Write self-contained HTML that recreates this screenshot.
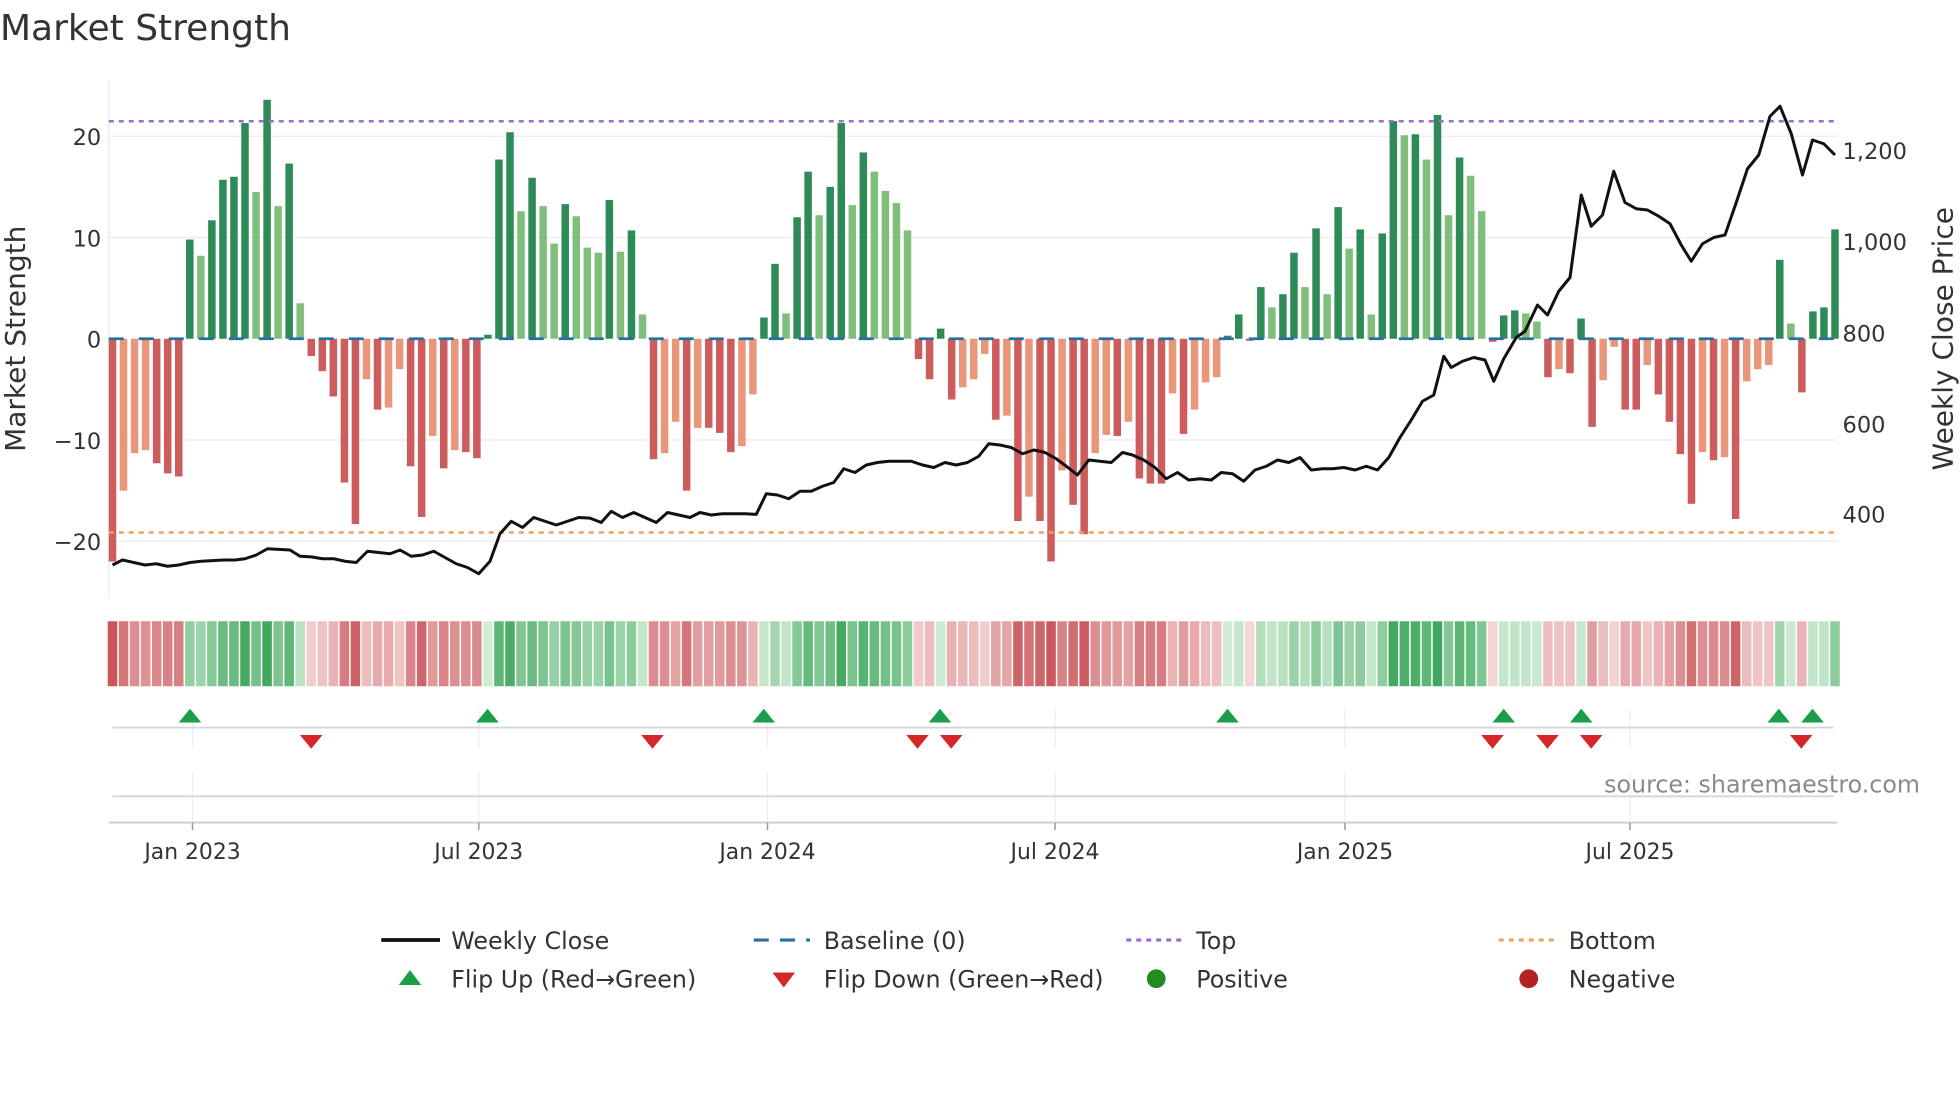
<!DOCTYPE html>
<html><head><meta charset="utf-8"><style>
html,body{margin:0;padding:0;background:#fff;}
svg{display:block;font-family:"DejaVu Sans","Liberation Sans",sans-serif;}
</style></head><body>
<svg id="s" width="1960" height="1102" viewBox="0 0 1568 881.6" xmlns="http://www.w3.org/2000/svg">
<rect width="1568" height="882" fill="#fff"/>
<text x="0" y="32" font-size="28.8" fill="#333">Market Strength</text>
<g stroke="#eceef2" stroke-width="1.2">
<line x1="87" x2="1470" y1="109" y2="109"/><line x1="87" x2="1470" y1="190" y2="190"/>
<line x1="87" x2="1470" y1="352" y2="352"/><line x1="87" x2="1470" y1="433" y2="433"/>
<line x1="87" x2="87" y1="64" y2="478"/>
</g>
<g font-size="18" fill="#333" text-anchor="end">
<text x="81" y="116">20</text><text x="81" y="197">10</text><text x="81" y="278">0</text>
<text x="81" y="359">−10</text><text x="81" y="440">−20</text>
</g>
<g font-size="18" fill="#333">
<text x="1474" y="127">1,200</text><text x="1474" y="200">1,000</text><text x="1474" y="273">800</text>
<text x="1474" y="346">600</text><text x="1474" y="418">400</text>
</g>
<text transform="translate(20,271) rotate(-90)" font-size="22.4" fill="#333" text-anchor="middle">Market Strength</text>
<text transform="translate(1562,271) rotate(-90)" font-size="22.4" fill="#333" text-anchor="middle">Weekly Close Price</text>
<g id="bars"></g>
<line x1="87" x2="1470" y1="271" y2="271" stroke="#2b6f9e" stroke-width="2.2" stroke-dasharray="12,12"/>
<line x1="87" x2="1470" y1="97" y2="97" stroke="#9b6bd6" stroke-width="2" stroke-dasharray="4,4"/>
<line x1="87" x2="1470" y1="426" y2="426" stroke="#f0a060" stroke-width="2" stroke-dasharray="4,4"/>
<polyline id="price" fill="none" stroke="#111" stroke-width="2.4" stroke-linejoin="round"/>
<g id="strip"></g>
<g stroke="#eceef2" stroke-width="1">
<line x1="154" x2="154" y1="568" y2="598"/><line x1="383" x2="383" y1="568" y2="598"/><line x1="614" x2="614" y1="568" y2="598"/><line x1="844" x2="844" y1="568" y2="598"/><line x1="1076" x2="1076" y1="568" y2="598"/><line x1="1304" x2="1304" y1="568" y2="598"/>
<line x1="154" x2="154" y1="617" y2="657"/><line x1="383" x2="383" y1="617" y2="657"/><line x1="614" x2="614" y1="617" y2="657"/><line x1="844" x2="844" y1="617" y2="657"/><line x1="1076" x2="1076" y1="617" y2="657"/><line x1="1304" x2="1304" y1="617" y2="657"/>
</g>
<line x1="90" x2="1467" y1="582" y2="582" stroke="#d4d6da" stroke-width="1.5"/>
<line x1="90" x2="1467" y1="637" y2="637" stroke="#d4d6da" stroke-width="1.5"/>
<line x1="87" x2="1470" y1="658" y2="658" stroke="#ccc" stroke-width="1.5"/>
<g stroke="#999" stroke-width="1.2">
<line x1="154" x2="154" y1="658" y2="664"/><line x1="383" x2="383" y1="658" y2="664"/><line x1="614" x2="614" y1="658" y2="664"/><line x1="844" x2="844" y1="658" y2="664"/><line x1="1076" x2="1076" y1="658" y2="664"/><line x1="1304" x2="1304" y1="658" y2="664"/>
</g>
<g id="flips"></g>
<text x="1536" y="634" font-size="19" fill="#8a8a8a" text-anchor="end">source: sharemaestro.com</text>
<g font-size="17.5" fill="#333" text-anchor="middle">
<text x="154" y="687">Jan 2023</text><text x="383" y="687">Jul 2023</text><text x="614" y="687">Jan 2024</text>
<text x="844" y="687">Jul 2024</text><text x="1076" y="687">Jan 2025</text><text x="1304" y="687">Jul 2025</text>
</g>
<g font-size="19" fill="#333">
<line x1="305" x2="352" y1="752" y2="752" stroke="#111" stroke-width="3"/>
<text x="361" y="759">Weekly Close</text>
<line x1="603" x2="648" y1="752" y2="752" stroke="#2b6f9e" stroke-width="2.5" stroke-dasharray="12,9"/>
<text x="659" y="759">Baseline (0)</text>
<line x1="901" x2="945" y1="752" y2="752" stroke="#9b6bd6" stroke-width="2.5" stroke-dasharray="4,4"/>
<text x="957" y="759">Top</text>
<line x1="1199" x2="1243" y1="752" y2="752" stroke="#f0a060" stroke-width="2.5" stroke-dasharray="4,4"/>
<text x="1255" y="759">Bottom</text>
<polygon points="319,788 337,788 328,776" fill="#1a9e48"/>
<text x="361" y="790">Flip Up (Red→Green)</text>
<polygon points="618,778 636,778 627,790" fill="#d62728"/>
<text x="659" y="790">Flip Down (Green→Red)</text>
<circle cx="925" cy="783" r="7.5" fill="#228b22"/>
<text x="957" y="790">Positive</text>
<circle cx="1223" cy="783" r="7.5" fill="#b22222"/>
<text x="1255" y="790">Negative</text>
</g>
</svg>
<script>
var v=[-22,-15,-11.3,-11,-12.3,-13.3,-13.6,
9.8,8.2,11.7,15.7,16,21.3,14.5,23.6,13.1,17.3,3.5,
-1.7,-3.2,-5.7,-14.2,-18.3,-4,-7,-6.8,-3,-12.6,-17.6,-9.6,-12.8,-11,-11.2,-11.8,
0.4,17.7,20.4,12.6,15.9,13.1,9.4,13.3,12.1,9,8.5,13.7,8.6,10.7,2.4,
-11.9,-11.3,-8.2,-15,-8.8,-8.8,-9.3,-11.2,-10.6,-5.5,
2.1,7.4,2.5,12,16.5,12.2,15,21.3,13.2,18.4,16.5,14.6,13.4,10.7,
-2,-4,1,-6,-4.8,-4,-1.5,-8,-7.6,-18,-15.6,-18,-22,-13,-16.4,-19.3,-11.3,-9.5,-9.6,-8.2,-13.8,-14.3,-14.3,-5.4,-9.4,-7,-4.3,-3.8,
0.3,2.4,-0.2,5.1,3.1,4.4,8.5,5.1,10.9,4.4,13,8.9,10.8,2.4,10.4,21.5,20.1,20.2,17.7,22.1,12.2,17.9,16.1,12.6,-0.3,2.3,2.8,2.5,1.7,
-3.8,-3,-3.4,2,-8.7,-4.1,-0.8,-7,-7,-2.6,-5.5,-8.2,-11.4,-16.3,-11.2,-12,-11.7,-17.8,-4.2,-3,-2.6,7.8,1.5,-5.3,2.7,3.1,10.8];
var NS="http://www.w3.org/2000/svg";
function el(t,a,p){var e=document.createElementNS(NS,t);for(var k in a)e.setAttribute(k,a[k]);p.appendChild(e);return e;}
var bars=document.getElementById('bars'),strip=document.getElementById('strip');
var sp=(1468-90)/(v.length-1);
function mix(a,b,t){t=Math.max(0,Math.min(1,t));return 'rgb('+[0,1,2].map(function(i){return Math.round(a[i]+(b[i]-a[i])*t)}).join(',')+')';}
for(var i=0;i<v.length;i++){
 var x=90+sp*i,val=v[i],prev=i?v[i-1]:0;
 var up=Math.abs(val)>=Math.abs(prev)||(val*prev<0);
 var c=val>=0?(up?'#2e8b57':'#7fbf7b'):(up?'#cd5c5c':'#e9967a');
 var h=Math.abs(val)*8.1;
 if(h>0.5) el('rect',{x:x-3,y:val>=0?271-h:271,width:6,height:h,fill:c},bars);
 var sc=val>=0?mix([212,238,216],[65,168,95],val/22):mix([245,215,215],[201,87,92],-val/20);
 el('rect',{x:x-sp/2+0.6,y:497,width:sp-1.2,height:52,fill:sc},strip);
}
var P=[[90,452],[98,448],[107,450],[116,452],[125,451],[134,453],[143,452],[152,450],[161,449],[170,448.5],[179,448],[188,448],[196,447],[205,444],[214,439],[223,439.5],[232,440],[240,445],[249,445.5],[258,447],[267,447],[276,449],[285,450],[294,441],[303,442],[312,443],[320,440],[329,445],[338,444],[347,441],[356,446],[365,451],[374,454],[383,459],[392,449],[400,427],[409,417],[418,422],[427,414],[436,417],[445,420],[454,417],[463,414],[472,414.5],[481,418],[489,409],[498,414],[507,410],[516,414],[525,418],[534,410],[543,412],[552,414],[560,410],[569,412],[578,411],[587,411],[596,411],[605,411.5],[613,395],[622,396],[631,399],[640,393],[649,393],[658,389],[667,386],[675,375],[684,378],[693,372],[702,370],[711,369],[720,369],[729,369],[738,372],[747,374],[756,370],[765,372],[774,370],[783,365],[791,355],[800,356],[809,358],[818,363],[827,360],[836,362],[845,367],[853,373],[862,380],[871,368],[880,369],[889,370],[898,362],[906,364],[915,368],[924,374],[933,383],[942,378],[951,384],[960,383],[969,384],[977,378],[986,379],[995,385],[1004,376],[1013,373],[1022,368],[1031,370],[1040,366],[1049,376],[1058,375],[1066,375],[1075,374],[1084,376],[1093,373],[1102,376],[1111,366],[1120,350],[1129,336],[1138,321],[1147,316],[1155,285],[1161,294],[1170,289],[1179,286],[1188,288],[1195,305],[1203,287],[1213,270],[1220,265],[1230,244],[1238,252],[1247,233],[1256,222],[1265,156],[1273,181],[1282,172],[1291,137],[1300,162],[1309,167],[1318,168],[1327,173],[1336,179],[1345,196],[1353,209],[1362,195],[1371,190],[1380,188],[1389,162],[1398,135],[1407,124],[1416,93],[1424,85],[1433,107],[1442,140],[1450,112],[1459,115],[1468,124]];
document.getElementById('price').setAttribute('points',P.map(function(p){return p.join(',')}).join(' '));
var fl=document.getElementById('flips');
[152,390,611,752,982,1203,1265,1423,1450].forEach(function(x){el('polygon',{points:(x-9)+',578 '+(x+9)+',578 '+x+',567',fill:'#1a9e48'},fl);});
[249,522,734,761,1194,1238,1273,1441].forEach(function(x){el('polygon',{points:(x-9)+',588 '+(x+9)+',588 '+x+',599',fill:'#d62728'},fl);});
</script>
</body></html>
